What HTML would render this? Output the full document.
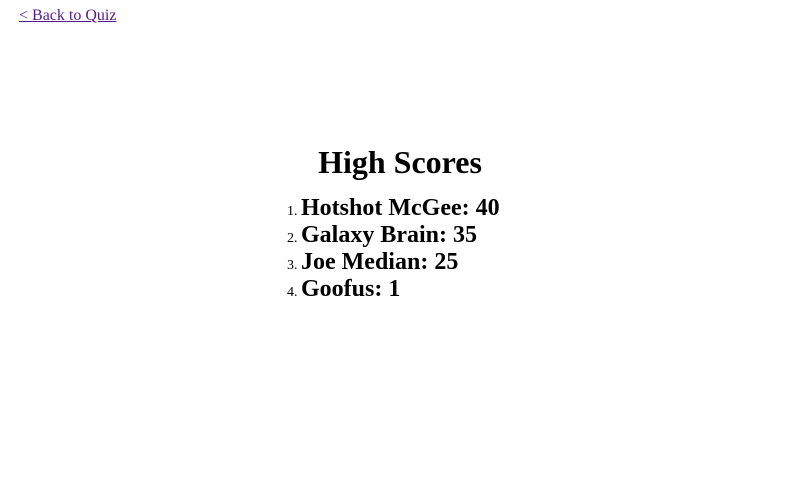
<!DOCTYPE html>
<html><head><style>
body{margin:0;font-family:"Liberation Serif",serif;background:#fff;color:#000;}
a{position:absolute;left:19px;top:7px;font-size:16px;color:#551a8b;}
h1{position:absolute;left:0;width:800px;top:144px;margin:0;text-align:center;font-size:32px;line-height:36px;font-weight:bold;}
ol{position:absolute;left:301px;top:195px;margin:0;padding:0;}
li{font-size:24px;font-weight:bold;line-height:27px;}
li::marker{font-size:14px;font-weight:normal;}
</style></head><body>
<a href="#">&lt; Back to Quiz</a>
<h1>High Scores</h1>
<ol>
<li>Hotshot McGee: 40</li>
<li>Galaxy Brain: 35</li>
<li>Joe Median: 25</li>
<li>Goofus: 1</li>
</ol>
</body></html>
